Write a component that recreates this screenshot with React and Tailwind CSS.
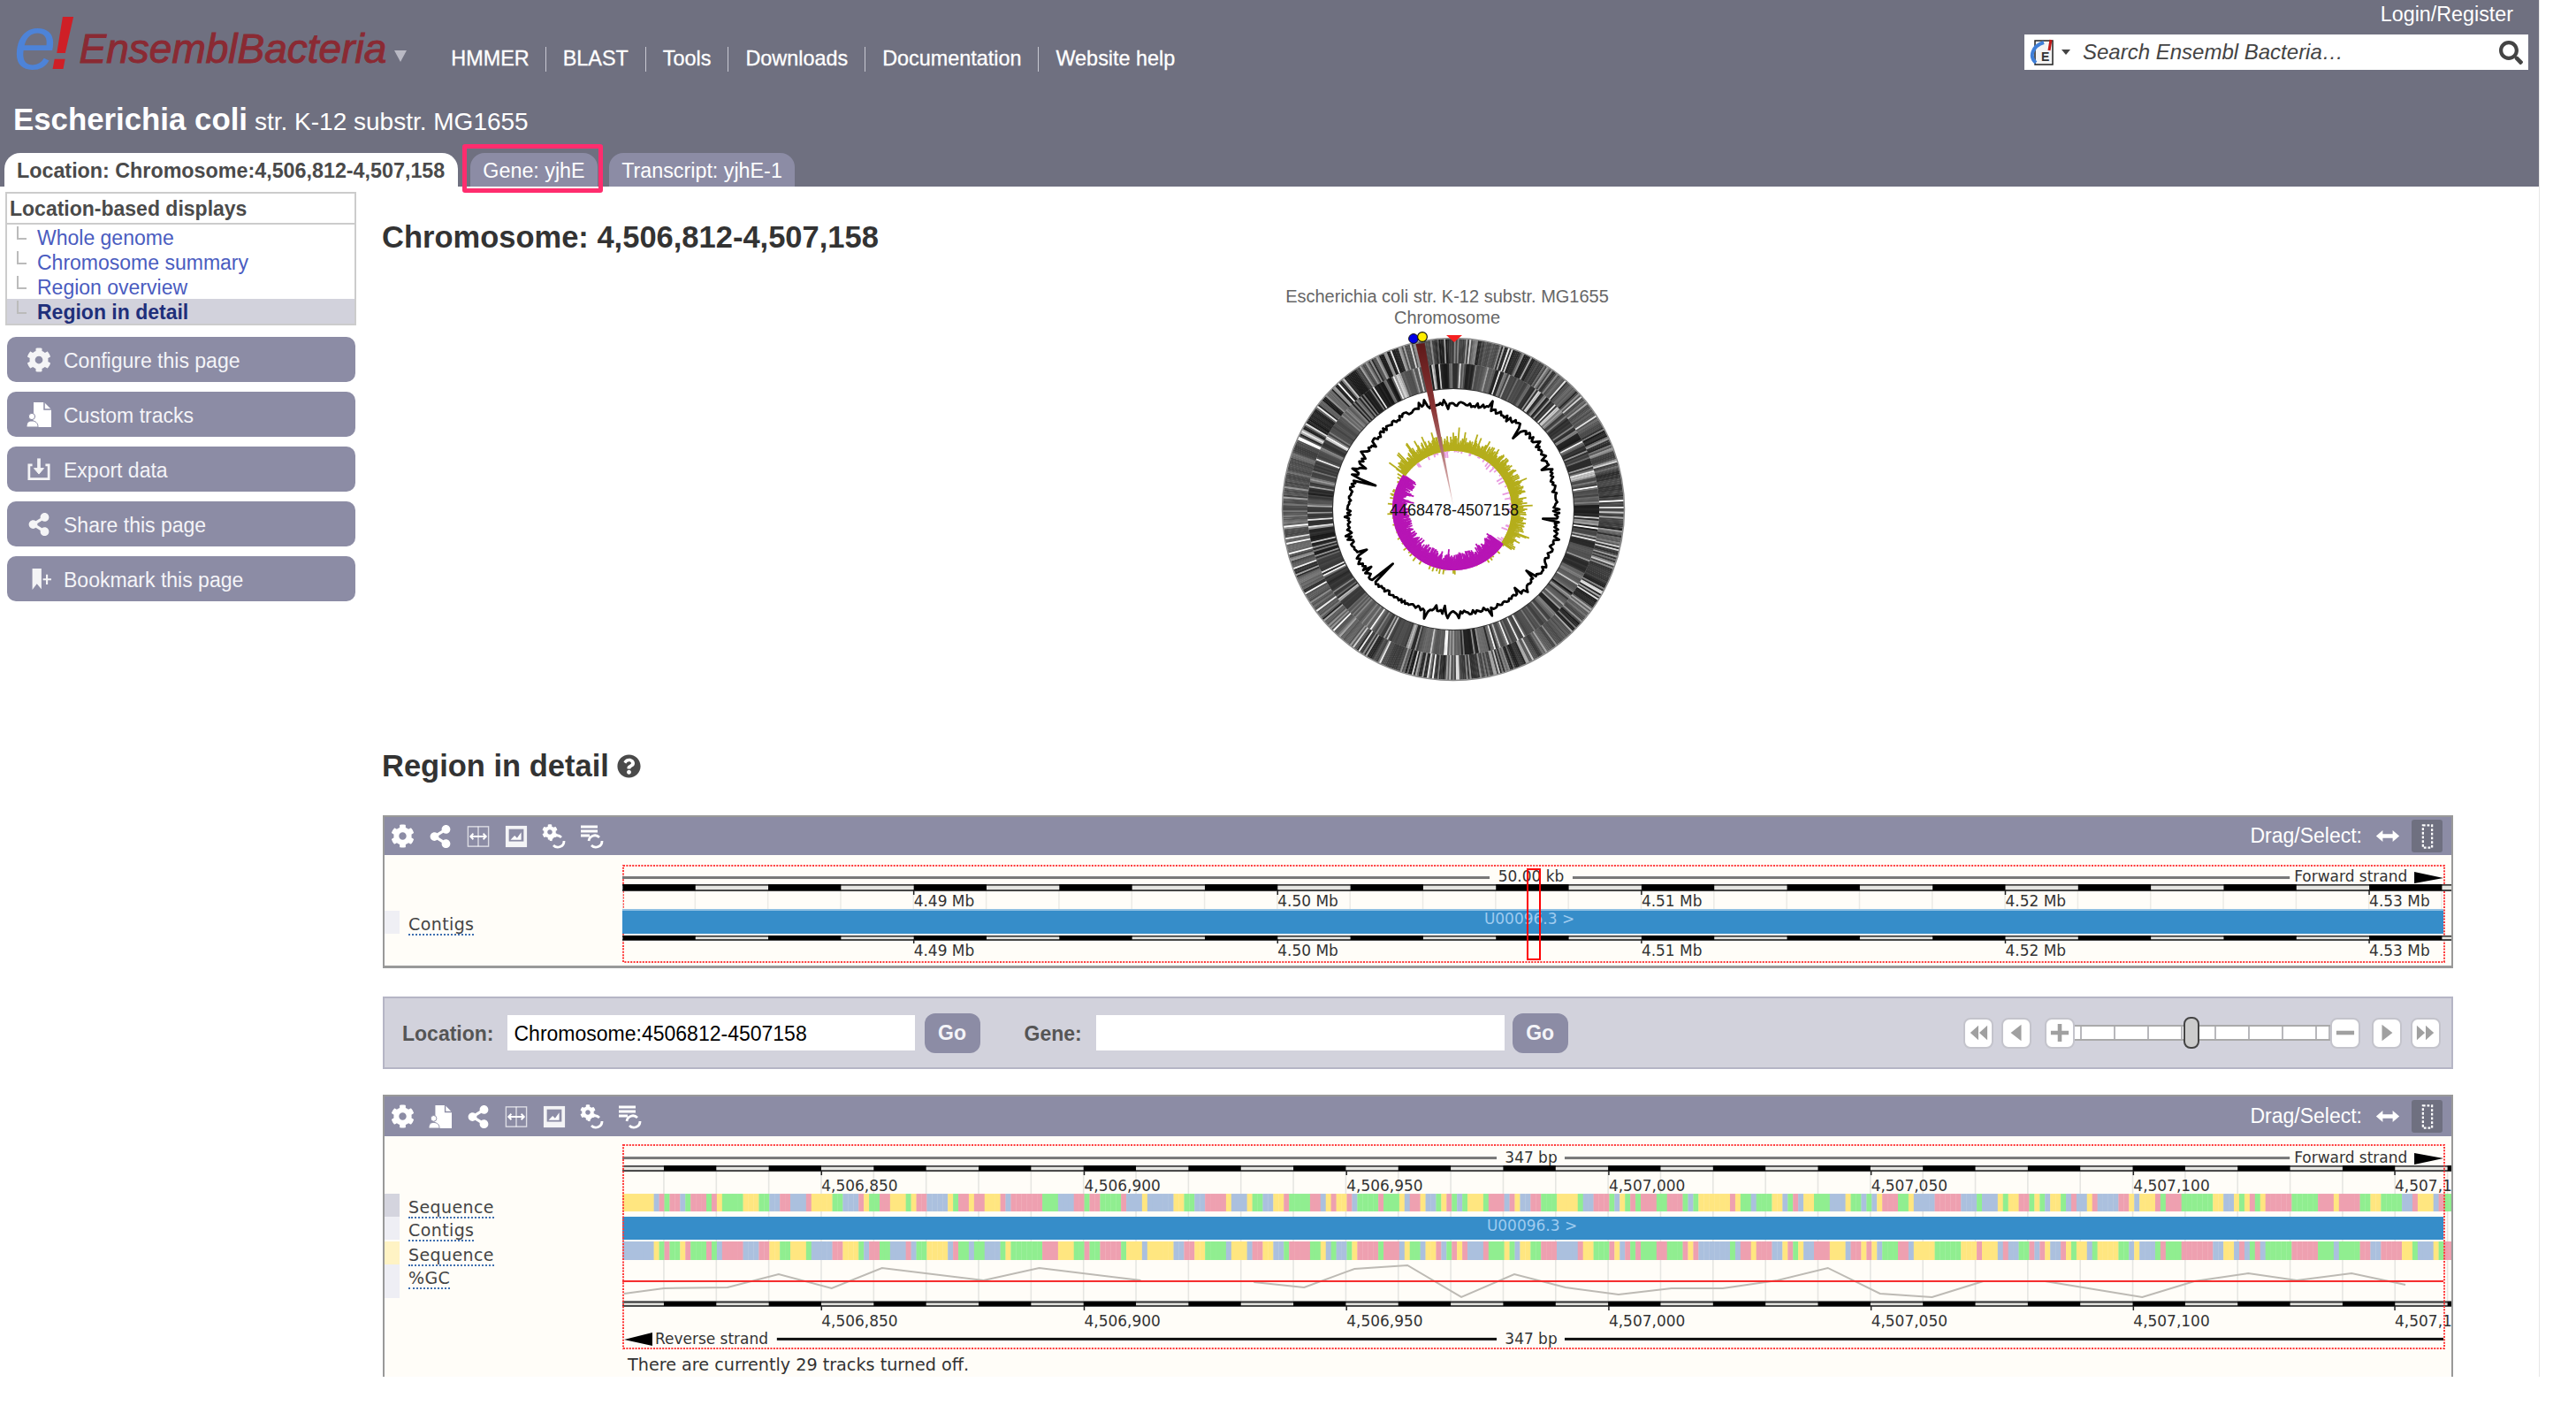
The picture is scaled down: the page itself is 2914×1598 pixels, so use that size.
import * as React from 'react';
import { FaCog, FaShareAlt, FaQuestionCircle, FaSearch } from 'react-icons/fa';

const SANS = "font-['Liberation_Sans',Arial,sans-serif]";

// small seeded generator so the drawings come out the same on every load
const makeRng = (seed) => () => {
  seed = (seed + 0x6d2b79f5) | 0;
  let t = Math.imul(seed ^ (seed >>> 15), 1 | seed);
  t = (t + Math.imul(t ^ (t >>> 7), 61 | t)) ^ t;
  return ((t ^ (t >>> 14)) >>> 0) / 4294967296;
};

const CX = 1644;
const CY = 574;

const polar = (r, deg) => {
  const a = ((deg - 90) * Math.PI) / 180;
  return [CX + r * Math.cos(a), CY + r * Math.sin(a)];
};

const ringLines = (seed, r1, r2, count) => {
  const rnd = makeRng(seed);
  const out = [];
  // genes come in stretches: a dark base that drifts, with thin light gaps
  let base = 40;
  for (let i = 0; i < count; i++) {
    const deg = (i / count) * 360;
    if (rnd() < 0.15) base = 20 + rnd() * 70;
    const v = rnd();
    const grey = v < 0.72 ? base + rnd() * 25 : v < 0.92 ? 100 + rnd() * 70 : 190 + rnd() * 65;
    const [x1, y1] = polar(r1, deg);
    const [x2, y2] = polar(r2, deg);
    out.push({ x1, y1, x2, y2, c: `rgb(${grey | 0},${grey | 0},${grey | 0})` });
  }
  return out;
};

const OUTER_RING = ringLines(11, 165, 193, 620);
const INNER_RING = ringLines(29, 137, 165, 520);

const wavyPath = () => {
  const rnd = makeRng(5);
  const spikes = { 228: 92, 287: 92, 96: 102, 40: 105, 130: 108, 20: 130, 345: 128, 160: 128, 195: 128, 245: 108 };
  let d = '';
  for (let deg = 0; deg < 360; deg++) {
    let r = 119 + (rnd() - 0.5) * 5 + 2 * Math.sin(deg / 17);
    if (rnd() < 0.2) r += (rnd() - 0.5) * 13;
    if (spikes[deg]) r = spikes[deg];
    const [x, y] = polar(r, deg);
    d += `${deg ? 'L' : 'M'}${x.toFixed(1)} ${y.toFixed(1)}`;
  }
  return d + 'Z';
};
const WAVY = wavyPath();

const gcBars = () => {
  const rnd = makeRng(77);
  const out = [];
  for (let i = 0; i < 520; i++) {
    const deg = (i / 520) * 360;
    const olive = deg < 125 || deg > 305;
    const [x1, y1] = polar(66, deg);
    if (olive) {
      const len = 7 + rnd() * 11 + (rnd() < 0.08 ? 9 : 0);
      const [x2, y2] = polar(66 + len, deg);
      out.push({ x1, y1, x2, y2, c: '#b5ae1c' });
      if (rnd() < 0.25) {
        const [x3, y3] = polar(66 - rnd() * 8, deg);
        out.push({ x1, y1, x2: x3, y2: y3, c: '#e89be0' });
      }
    } else {
      const len = 10 + rnd() * 10 + (rnd() < 0.08 ? 4 : 0);
      const [xa, ya] = polar(69, deg);
      const [x2, y2] = polar(69 - len, deg);
      out.push({ x1: xa, y1: ya, x2, y2, c: '#b715b5' });
      if (rnd() < 0.12) {
        const [x3, y3] = polar(69 + rnd() * 6, deg);
        out.push({ x1: xa, y1: ya, x2: x3, y2: y3, c: '#b5ae1c' });
      }
    }
  }
  return out;
};
const GC_BARS = gcBars();

const CircularPlot = () => (
  <svg viewBox="1400 320 500 460" className="ml-[967px] mt-[34px] block h-[460px] w-[500px]">
    <defs>
      <linearGradient id="wedge" gradientUnits="userSpaceOnUse" x1="1606" y1="387" x2="1644" y2="570">
        <stop offset="0" stopColor="#5f1a1a" />
        <stop offset="0.4" stopColor="#8a3434" />
        <stop offset="1" stopColor="#e8c8c8" />
      </linearGradient>
    </defs>
    <text x="1637" y="340" textAnchor="middle" fontFamily="Liberation Sans" fontSize="20" fill="#666">
      Escherichia coli str. K-12 substr. MG1655
    </text>
    <text x="1637" y="364" textAnchor="middle" fontFamily="Liberation Sans" fontSize="20" fill="#666">
      Chromosome
    </text>
    <circle cx={CX} cy={CY} r="165" fill="#333" />
    {OUTER_RING.map((l, i) => (
      <line key={i} x1={l.x1} y1={l.y1} x2={l.x2} y2={l.y2} stroke={l.c} strokeWidth="2.2" />
    ))}
    {INNER_RING.map((l, i) => (
      <line key={i} x1={l.x1} y1={l.y1} x2={l.x2} y2={l.y2} stroke={l.c} strokeWidth="2.1" />
    ))}
    <circle cx={CX} cy={CY} r="193.5" fill="none" stroke="#8a8a8a" strokeWidth="1.5" />
    <circle cx={CX} cy={CY} r="136" fill="#fff" />
    <path d={WAVY} fill="none" stroke="#000" strokeWidth="2.8" strokeLinejoin="round" />
    {GC_BARS.map((l, i) => (
      <line key={i} x1={l.x1} y1={l.y1} x2={l.x2} y2={l.y2} stroke={l.c} strokeWidth="1.8" />
    ))}
    <polygon points="1601.5,387 1611.5,386 1644,570" fill="url(#wedge)" />
    <circle cx="1599" cy="381" r="5.4" fill="#0000e6" stroke="#111" strokeWidth="1" />
    <circle cx="1609" cy="379" r="5.4" fill="#ffee00" stroke="#111" strokeWidth="1.2" />
    <polygon points="1636,377 1654,377 1645,385" fill="#f52020" />
    <text x="1645" y="581" textAnchor="middle" fontFamily="Liberation Sans" fontSize="18" fill="#111">
      4468478-4507158
    </text>
  </svg>
);

/* ---- toolbar icons ---- */

const SplitIcon = () => (
  <svg viewBox="0 0 28 28" className="h-[26px] w-[28px]" fill="none" stroke="#fff">
    <rect x="1.5" y="2" width="25" height="24" strokeWidth="1.5" opacity="0.7" />
    <path d="M14 2v24" strokeWidth="1.5" opacity="0.7" />
    <path d="M5 14h18M8 10.5 4.5 14 8 17.5M20 10.5l3.5 3.5-3.5 3.5" strokeWidth="2" />
  </svg>
);

const ImageIcon = () => (
  <svg viewBox="0 0 28 28" className="h-[26px] w-[26px]">
    <rect x="1" y="1" width="26" height="26" fill="#f4f4f6" />
    <rect x="5" y="5" width="18" height="15" fill="#8c8ca5" />
    <path d="M7 18l5-5 3 3 5-7v9z" fill="#fff" />
  </svg>
);

const GearRefreshIcon = () => (
  <svg viewBox="0 0 28 28" className="h-[28px] w-[28px]">
    <foreignObject x="0" y="0" width="18" height="18">
      <FaCog size={18} color="#fff" />
    </foreignObject>
    <path d="M10 19a7 7 0 0 1 12-4M25 19a7 7 0 0 1-12 5" fill="none" stroke="#fff" strokeWidth="2.8" />
  </svg>
);

const TracksRefreshIcon = () => (
  <svg viewBox="0 0 28 28" className="h-[28px] w-[28px]">
    <path d="M1 3h19M1 8h19M1 13h10" stroke="#fff" strokeWidth="3" />
    <path d="M10 19a7 7 0 0 1 12-4M25 19a7 7 0 0 1-12 5" fill="none" stroke="#fff" strokeWidth="2.8" />
  </svg>
);

const CustomTracksIcon = ({ className }) => (
  <svg viewBox="0 0 28 28" className={className} fill="#fff">
    <path d="M8 0h12l8 8v20H10c0-5-1-8-5-9 2-2 3-4 3-6z" />
    <path d="M20 0v8h8" fill="none" stroke="#8c8ca5" strokeWidth="1.5" />
    <circle cx="6" cy="16" r="3.6" stroke="#8c8ca5" strokeWidth="1" />
    <path d="M0 28c0-5 2-7 6-7s7 2 7 7z" stroke="#8c8ca5" strokeWidth="1" />
  </svg>
);

const ExportIcon = ({ className }) => (
  <svg viewBox="0 0 28 28" className={className} fill="none" stroke="#f4f4f6">
    <path d="M6 9H2v17h24V9h-4" strokeWidth="3" />
    <path d="M14 1v17" strokeWidth="4" />
    <path d="M8 13l6 7 6-7z" fill="#f4f4f6" strokeWidth="1" />
  </svg>
);

const BookmarkIcon = ({ className }) => (
  <svg viewBox="0 0 28 28" className={className} fill="#f4f4f6">
    <path d="M3 0h12v27l-6-7-6 8z" />
    <path d="M17 13h11v2.5H17zM21 8h2.5v13H21z" />
  </svg>
);

const PanelIcons = [
  { id: 'config', node: <FaCog size={27} color="#fff" /> },
  { id: 'custom', node: <CustomTracksIcon className="h-[28px] w-[26px]" /> },
  { id: 'share', node: <FaShareAlt size={26} color="#fff" /> },
  { id: 'split', node: <SplitIcon /> },
  { id: 'image', node: <ImageIcon /> },
  { id: 'gear', node: <GearRefreshIcon /> },
  { id: 'tracks', node: <TracksRefreshIcon /> },
];

const DragArrow = () => (
  <svg viewBox="0 0 28 16" className="h-[15px] w-[28px]" fill="#fff">
    <path d="M0 8l8-7v4.5h12V1l8 7-8 7v-4.5H8V15z" />
  </svg>
);

const SelectIcon = () => (
  <svg viewBox="0 0 14 30" className="h-[28px] w-[14px]" fill="none" stroke="#fff" strokeWidth="2.4" strokeDasharray="3 2">
    <rect x="1.5" y="1.5" width="11" height="27" />
  </svg>
);

const PanelHeader = ({ icons, height }) => (
  <div className={`flex items-center justify-between border-t-2 border-[#999] bg-[#8c8ca5] pl-[6px] pr-[10px] ${height}`}>
    <div className="flex items-center gap-[15px]">
      {icons.map((id) => (
        <span key={id} className="flex w-[28px] justify-center">
          {PanelIcons.find((p) => p.id === id).node}
        </span>
      ))}
    </div>
    <div className="flex items-center">
      <span className="text-[23px] text-white">Drag/Select:</span>
      <span className="ml-[15px]"><DragArrow /></span>
      <span className="ml-[13px] flex h-[37px] w-[35px] items-center justify-center rounded-[3px] bg-[#6f7080]">
        <SelectIcon />
      </span>
    </div>
  </div>
);

/* ---- track drawings, viewBox uses page pixels ---- */

const TrackText = ({ x, y, anchor, fill = '#333', size = 17, children }) => (
  <text x={x} y={y} textAnchor={anchor} fontFamily="DejaVu Sans" fontSize={size} fill={fill}>
    {children}
  </text>
);

const DottedBox = ({ y, h }) => (
  <rect x="705" y={y} width="2062" height={h} fill="none" stroke="#ff3a3a" strokeWidth="2" strokeDasharray="2 1.4" />
);

const ScaleBar = ({ y, h, starts, seg }) => (
  <g>
    <rect x="704" y={y} width="2071" height={h} fill="#e6e6e2" />
    <rect x="704" y={y} width="2071" height="1.6" fill="#333" />
    <rect x="704" y={y + h - 2} width="2071" height="2" fill="#444" />
    {starts.map((s) => (
      <rect key={s} x={s} y={y} width={seg} height={h - 1} fill="#000" />
    ))}
  </g>
);

const range = (from, to, step) => {
  const out = [];
  for (let v = from; v < to; v += step) out.push(v);
  return out;
};

const OVERVIEW_TICKS = [
  [1034, '4.49 Mb'],
  [1446, '4.50 Mb'],
  [1858, '4.51 Mb'],
  [2270, '4.52 Mb'],
  [2682, '4.53 Mb'],
];

const OverviewImage = () => {
  const starts = range(1034 - 329.6, 2775, 164.8).map((v) => Math.max(v, 704));
  return (
    <svg viewBox="704 977 2071 115" className="block h-[115px] w-[2071px]">
      <DottedBox y="978" h="109" />
      <rect x="704" y="990" width="982" height="3" fill="#777" />
      <rect x="1780" y="990" width="812" height="3" fill="#777" />
      <TrackText x="1733" y="996" anchor="middle">50.00 kb</TrackText>
      <TrackText x="2597" y="996" size={17}>Forward strand</TrackText>
      <polygon points="2733,985 2766,992 2733,998" fill="#000" />
      {range(704, 2775, 82.4).map((x) => (
        <line key={x} x1={x} x2={x} y1="1007" y2="1028" stroke="#ecebe6" strokeWidth="1.5" />
      ))}
      <ScaleBar y={999} h={8} starts={starts} seg={82.4} />
      <rect x="704" y="1028" width="2062" height="27" fill="#368dc9" />
      <rect x="704" y="1027" width="2062" height="2" fill="#8fc0e2" />
      <TrackText x="1731" y="1044" anchor="middle" fill="#9fcbef" size={17}>U00096.3 &gt;</TrackText>
      <ScaleBar y={1057} h={6} starts={starts} seg={82.4} />
      {OVERVIEW_TICKS.map(([x, label]) => (
        <g key={x}>
          <line x1={x} x2={x} y1="1005" y2="1011" stroke="#222" strokeWidth="1.5" />
          <line x1={x} x2={x} y1="1061" y2="1066" stroke="#222" strokeWidth="1.5" />
          <TrackText x={x} y="1024">{label}</TrackText>
          <TrackText x={x} y="1080">{label}</TrackText>
        </g>
      ))}
      <rect x="1729" y="982" width="14" height="102" fill="none" stroke="#f00" strokeWidth="2" />
    </svg>
  );
};

const BASE_COLOURS = ['#eea0b0', '#90ee90', '#ffe680', '#abc0de'];
const COMPLEMENT = [1, 0, 3, 2];
const BASE_W = 297.2 / 50;

const BASES = (() => {
  const rnd = makeRng(2024);
  const out = [];
  let cur = 0;
  for (let i = 0; i < 349; i++) {
    if (rnd() > 0.4) cur = Math.floor(rnd() * 4);
    out.push(cur);
  }
  return out;
})();

const GC_SEGMENTS = [
  '706,1462 751,1456 823,1455 881,1440 941,1456 998,1433 1113,1447 1176,1433 1291,1447',
  '1419,1449 1476,1455 1533,1434 1593,1430 1654,1466 1714,1440 1772,1455 1832,1463 1892,1456 1950,1456 2012,1447 2069,1433 2128,1462 2187,1466 2245,1448',
  '2315,1448 2425,1466 2484,1448 2545,1439 2600,1447 2662,1439 2723,1452',
];

const DETAIL_TICKS = [
  [929.5, '4,506,850'],
  [1227, '4,506,900'],
  [1524, '4,506,950'],
  [1821, '4,507,000'],
  [2118, '4,507,050'],
  [2415, '4,507,100'],
  [2711, '4,507,150'],
];

const DetailImage = () => {
  const starts = range(751, 2775, 118.8);
  return (
    <svg viewBox="704 1293 2071 232" className="block h-[232px] w-[2071px]">
      {range(751, 2775, 59.4).map((x) => (
        <line key={x} x1={x} x2={x} y1="1324" y2="1471" stroke="#e6e6e2" strokeWidth="1.6" />
      ))}
      <rect x="704" y="1307" width="990" height="3" fill="#777" />
      <rect x="1771" y="1307" width="821" height="3" fill="#777" />
      <TrackText x="1733" y="1314" anchor="middle">347 bp</TrackText>
      <TrackText x="2597" y="1314" size={17}>Forward strand</TrackText>
      <polygon points="2733,1303 2766,1309 2733,1316" fill="#000" />
      <ScaleBar y={1317} h={7} starts={starts} seg={59.4} />
      {BASES.map((b, i) => (
        <rect key={i} x={704 + i * BASE_W} y="1349" width={BASE_W + 0.3} height="20" fill={BASE_COLOURS[b]} />
      ))}
      <rect x="704" y="1375" width="2062" height="26" fill="#368dc9" />
      <TrackText x="1734" y="1391" anchor="middle" fill="#9fcbef" size={17}>U00096.3 &gt;</TrackText>
      {BASES.map((b, i) => (
        <rect key={i} x={704 + i * BASE_W} y="1403" width={BASE_W + 0.3} height="21" fill={BASE_COLOURS[COMPLEMENT[b]]} />
      ))}
      {GC_SEGMENTS.map((pts) => (
        <polyline key={pts} points={pts} fill="none" stroke="#bdbab4" strokeWidth="2" />
      ))}
      <rect x="704" y="1447" width="2062" height="2" fill="#f52a2a" />
      <rect x="704" y="1470" width="2071" height="2.5" fill="#888" />
      <ScaleBar y={1471} h={6} starts={starts} seg={59.4} />
      {DETAIL_TICKS.map(([x, label]) => (
        <g key={x}>
          <line x1={x} x2={x} y1="1323" y2="1328" stroke="#222" strokeWidth="1.5" />
          <line x1={x} x2={x} y1="1476" y2="1481" stroke="#222" strokeWidth="1.5" />
          <TrackText x={x} y="1346">{label}</TrackText>
          <TrackText x={x} y="1499">{label}</TrackText>
        </g>
      ))}
      <polygon points="706,1514 738,1506 738,1521" fill="#000" />
      <TrackText x="741" y="1519" size={17}>Reverse strand</TrackText>
      <rect x="879" y="1512" width="815" height="3" fill="#111" />
      <rect x="1771" y="1512" width="995" height="3" fill="#111" />
      <TrackText x="1733" y="1519" anchor="middle">347 bp</TrackText>
      <DottedBox y="1294" h="230" />
    </svg>
  );
};

const TrackLabel = ({ height, handle, label, top = 0 }) => (
  <div className="flex" style={{ height, marginTop: top }}>
    <span className={`w-[17px] ${handle}`} />
    {label && (
      <span className="ml-[10px] self-start pt-[4px]">
        <span className="inline-block border-b-2 border-dotted border-[#3f6fb0] font-['DejaVu_Sans',sans-serif] text-[19px] leading-[22px] tracking-[0.4px] text-[#444]">
          {label}
        </span>
      </span>
    )}
  </div>
);

/* ---- page chrome ---- */

const SearchLogo = () => (
  <svg viewBox="0 0 28 30" className="h-[30px] w-[28px]">
    <rect x="6" y="2" width="20" height="27" fill="#f4f4f4" stroke="#222" strokeWidth="1.5" />
    <path d="M7 27C-1 20 3 8 16 4" fill="none" stroke="#3f7fd8" strokeWidth="4" />
    <path d="M24 1l-2 12" stroke="#c01818" strokeWidth="3" />
    <text x="13" y="25" fontFamily="Liberation Sans" fontSize="14" fontWeight="700" fill="#333">E</text>
  </svg>
);

const NAV = ['HMMER', 'BLAST', 'Tools', 'Downloads', 'Documentation', 'Website help'];

const Header = () => (
  <header className="flex h-[211px] flex-col bg-[#6f7080]">
    <div className="flex h-[106px] justify-between">
      <div className="flex items-start pl-[16px]">
        <div className="mt-[9px] flex h-[80px] items-end text-[85px] italic leading-[80px]">
          <span className="tracking-[-7px] text-[#4d83d8]">e</span>
          <span className="font-bold text-[#cf1f26]">!</span>
        </div>
        <span className="ml-[5px] mt-[28px] text-[46px] italic leading-[54px] text-[#8a2a33] [-webkit-text-stroke:1px_#8a2a33]">
          EnsemblBacteria
        </span>
        <span className="ml-[9px] mt-[57px] h-0 w-0 border-x-[7px] border-t-[13px] border-x-transparent border-t-[#b9b9c4]" />
        <nav className="ml-[50px] mt-[53px] flex">
          {NAV.map((item, i) => (
            <span
              key={item}
              className={`flex h-[28px] items-center text-[23.4px] text-white [-webkit-text-stroke:0.3px_#fff] ${i === 0 ? 'pr-[18px]' : 'px-[19px]'} ${i < NAV.length - 1 ? 'border-r border-[#c8c8d2]' : ''}`}
            >
              {item}
            </span>
          ))}
        </nav>
      </div>
      <div className="flex flex-col items-end pr-[12px]">
        <span className="mr-[17px] mt-[2px] text-[23.3px] leading-[28px] text-white">Login/Register</span>
        <div className="mt-[9px] flex h-[40px] w-[570px] items-center bg-white pl-[6px] pr-[6px]">
          <SearchLogo />
          <span className="ml-[8px] h-0 w-0 border-x-[5px] border-t-[6px] border-x-transparent border-t-[#444]" />
          <span className="ml-[14px] text-[24px] italic text-[#444]">Search Ensembl Bacteria…</span>
          <FaSearch size={27} color="#444" className="ml-auto" />
        </div>
      </div>
    </div>
    <div className="mt-[9px] flex items-baseline pl-[15px] text-white">
      <span className="text-[34.8px] font-bold leading-[40px]">Escherichia coli</span>
      <span className="ml-[8px] text-[28px] leading-[40px]">str. K-12 substr. MG1655</span>
    </div>
    <div className="mt-auto flex items-end pl-[5px] text-[23.3px]">
      <span className="flex h-[38px] w-[513px] items-center rounded-t-[18px] bg-white pl-[14px] pt-[3px] font-bold text-[#4a4a4a]">
        Location: Chromosome:4,506,812-4,507,158
      </span>
      <span className="relative ml-[14px] flex h-[38px] w-[144px] items-center justify-center rounded-t-[16px] bg-[#8c8ca5] pt-[3px] text-white">
        Gene: yjhE
        <span className="absolute bottom-[-7px] left-[-9px] right-[-6px] top-[-10px] rounded-[3px] border-[5px] border-[#ff2d6e]" />
      </span>
      <span className="ml-[13px] flex h-[38px] w-[210px] items-center justify-center rounded-t-[16px] bg-[#8c8ca5] pt-[3px] text-white">
        Transcript: yjhE-1
      </span>
    </div>
  </header>
);

const LOCATION_LINKS = ['Whole genome', 'Chromosome summary', 'Region overview', 'Region in detail'];

const SIDE_BUTTONS = [
  { label: 'Configure this page', icon: <FaCog size={28} color="#f4f4f6" /> },
  { label: 'Custom tracks', icon: <CustomTracksIcon className="h-[28px] w-[28px]" /> },
  { label: 'Export data', icon: <ExportIcon className="h-[27px] w-[26px]" /> },
  { label: 'Share this page', icon: <FaShareAlt size={26} color="#f4f4f6" /> },
  { label: 'Bookmark this page', icon: <BookmarkIcon className="ml-[4px] h-[28px] w-[24px]" /> },
];

const Sidebar = () => (
  <aside className="w-[433px] shrink-0 pl-[6px]">
    <div className="mt-[6px] w-[397px] border-2 border-[#ccc] text-[23px]">
      <div className="flex h-[35px] items-center border-b-2 border-[#ccc] pl-[3px] pt-[2px] font-bold text-[#4a4a4a]">
        Location-based displays
      </div>
      {LOCATION_LINKS.map((link, i) => {
        const active = i === LOCATION_LINKS.length - 1;
        return (
          <div
            key={link}
            className={`flex h-[28px] items-center ${active ? 'bg-[#d2d2dc] font-bold text-[#1f2f7a]' : 'text-[#4a5cc0]'}`}
          >
            <span className="mb-[10px] ml-[11px] h-[15px] w-[11px] border-b-2 border-l-2 border-[#bbb]" />
            <span className="ml-[12px] pt-[3px]">{link}</span>
          </div>
        );
      })}
    </div>
    <div className="ml-[2px] mt-[13px] flex w-[394px] flex-col gap-[11px]">
      {SIDE_BUTTONS.map((b) => (
        <div key={b.label} className="flex h-[51px] items-center rounded-[10px] bg-[#8c8ca5] text-[23px] text-[#f4f4f8]">
          <span className="ml-[22px] flex w-[28px] justify-center">{b.icon}</span>
          <span className="ml-[14px] pt-[3px]">{b.label}</span>
        </div>
      ))}
    </div>
  </aside>
);

const GoButton = ({ className = '' }) => (
  <span className={`flex h-[45px] w-[63px] items-center justify-center rounded-[12px] bg-[#8c8ca5] text-[23px] font-bold text-[#f4f4f8] ${className}`}>
    Go
  </span>
);

const ZoomButton = ({ children, className = '' }) => (
  <span className={`flex h-[35px] w-[34px] items-center justify-center rounded-[8px] border-2 border-[#c4c4cc] bg-white ${className}`}>
    <svg viewBox="0 0 24 24" className="h-[22px] w-[22px]" fill="#a0a0a0">{children}</svg>
  </span>
);

const ZoomSlider = () => (
  <div className="ml-auto mr-[12px] flex items-center">
    <ZoomButton><path d="M12 3v18L2 12zM23 3v18L13 12z" /></ZoomButton>
    <ZoomButton className="ml-[9px]"><path d="M18 2v20L5 12z" /></ZoomButton>
    <ZoomButton className="ml-[15px]"><path d="M9.5 1h5v8.5H23v5h-8.5V23h-5v-8.5H1v-5h8.5z" /></ZoomButton>
    <div className="relative flex h-[18px] w-[289px] border-y-2 border-[#aaa] bg-white">
      {[8, 38, 38, 38, 38, 38, 38, 38, 15].map((w, i) => (
        <span key={i} className="shrink-0 border-r-2 border-[#b8b8bc]" style={{ width: w }} />
      ))}
      <span className="absolute left-[123px] top-[-11px] h-[36px] w-[18px] rounded-[8px] border-2 border-[#444] bg-[#ccc]" />
    </div>
    <ZoomButton><path d="M1 9.5h22v5H1z" /></ZoomButton>
    <ZoomButton className="ml-[13px]"><path d="M6 2v20l13-10z" /></ZoomButton>
    <ZoomButton className="ml-[10px]"><path d="M1 3v18l10-9zM12 3v18l10-9z" /></ZoomButton>
  </div>
);

const LocationBar = () => (
  <div className="mt-[32px] flex h-[82px] items-center border-2 border-[#b5b5c5] bg-[#d2d2dc] pl-[20px] text-[23px]">
    <span className="pt-[2px] font-bold text-[#555]">Location:</span>
    <span className="ml-[15px] flex h-[40px] w-[461px] items-center bg-white pl-[8px] pt-[2px] text-black">Chromosome:4506812-4507158</span>
    <GoButton className="ml-[11px]" />
    <span className="ml-[50px] pt-[2px] font-bold text-[#555]">Gene:</span>
    <span className="ml-[16px] h-[40px] w-[462px] bg-white" />
    <GoButton className="ml-[9px]" />
    <ZoomSlider />
  </div>
);

const App = () => (
  <div className={`w-[2873px] border-r border-[#e6e6e6] ${SANS}`}>
    <Header />
    <div className="flex h-[1346px] items-start">
      <Sidebar />
      <main className="w-[2342px]">
        <h2 className="-ml-[1px] mt-[37px] text-[34.5px] font-bold leading-[40px] text-[#333]">
          Chromosome: 4,506,812-4,507,158
        </h2>
        <CircularPlot />
        <h2 className="-ml-[1px] mt-[64px] flex items-center text-[34.5px] font-bold leading-[40px] text-[#333]">
          Region in detail
          <FaQuestionCircle size={27} color="#4a4a4a" className="ml-[9px]" />
        </h2>

        {/* overview panel */}
        <section className="mt-[36px] h-[173px] border-x-2 border-b-[3px] border-[#999] bg-[#fffdf8]">
          <PanelHeader icons={['config', 'share', 'split', 'image', 'gear', 'tracks']} height="h-[45px]" />
          <div className="flex pt-[11px]">
            <div className="w-[269px] shrink-0">
              <TrackLabel height={26} top={52} handle="bg-[#efeff4]" label="Contigs" />
            </div>
            <OverviewImage />
          </div>
        </section>

        <LocationBar />

        {/* detail panel */}
        <section className="mt-[29px] h-[320px] border-x-2 border-[#999] bg-[#fffdf8]">
          <PanelHeader icons={['config', 'custom', 'share', 'split', 'image', 'gear', 'tracks']} height="h-[47px]" />
          <div className="flex pt-[9px]">
            <div className="w-[269px] shrink-0">
              <TrackLabel height={26} top={56} handle="bg-[#d4d4de]" label="Sequence" />
              <TrackLabel height={26} handle="bg-[#eeeef4]" label="Contigs" />
              <TrackLabel height={26} top={2} handle="bg-[#fff3c4]" label="Sequence" />
              <TrackLabel height={38} handle="bg-[#eeeef4]" label="%GC" />
            </div>
            <DetailImage />
          </div>
          <p className="ml-[275px] mt-[6px] font-['DejaVu_Sans',sans-serif] text-[19.2px] leading-[24px] text-[#333]">
            There are currently 29 tracks turned off.
          </p>
        </section>
      </main>
    </div>
  </div>
);

export default App;
